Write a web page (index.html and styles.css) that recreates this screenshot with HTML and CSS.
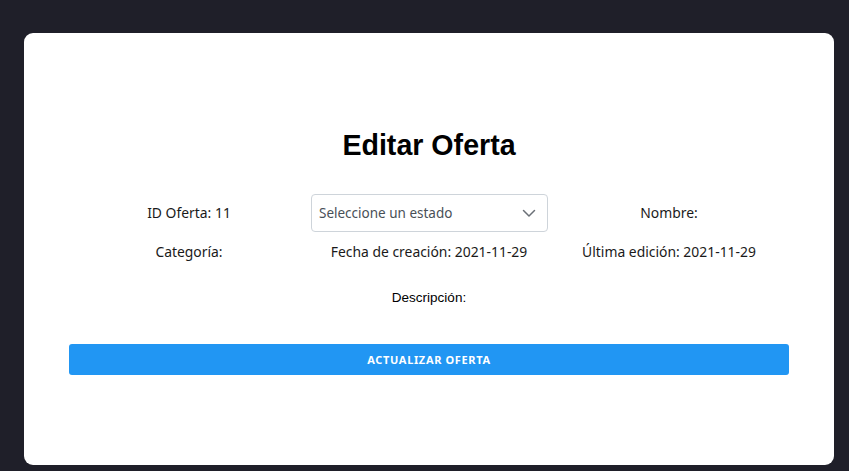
FILE: index.html
```html
<!DOCTYPE html>
<html lang="es">
<head>
<meta charset="utf-8">
<title>Editar Oferta</title>
<link rel="stylesheet" href="styles.css">
</head>
<body>
<main class="card">
  <h1 class="title">Editar Oferta</h1>
  <div class="fields">
    <div class="field">ID Oferta: 11</div>
    <div class="select">
      <span class="select-text">Seleccione un estado</span>
      <svg class="chev" width="16" height="12" viewBox="0 0 16 12"><path d="M2.5 3.5l5.5 5.5 5.5-5.5" fill="none" stroke="#6b7077" stroke-width="1.5" stroke-linecap="round" stroke-linejoin="round"/></svg>
    </div>
    <div class="field">Nombre:</div>
    <div class="field">Categoría:</div>
    <div class="field">Fecha de creación: 2021-11-29</div>
    <div class="field">Última edición: 2021-11-29</div>
  </div>
  <div class="desc">Descripción:</div>
  <button class="btn" type="button">ACTUALIZAR OFERTA</button>
</main>
</body>
</html>
```
FILE: styles.css
```css
html, body {
  margin: 0;
  padding: 0;
}
body {
  background: #1f1f29;
  padding: 33px 15px 0 24px;
  height: 471px;
  box-sizing: border-box;
  overflow: hidden;
}
.card {
  width: 810px;
  height: 432px;
  box-sizing: border-box;
  background: #fff;
  border-radius: 9px;
  padding: 95px 45px 0;
  font-family: "Noto Sans", "Open Sans", sans-serif;
  color: #1a1a1a;
}
.title {
  margin: 0;
  text-align: center;
  font-family: "Liberation Sans", Arial, sans-serif;
  font-weight: bold;
  font-size: 28.6px;
  line-height: 34px;
  color: #000;
}
.fields {
  margin-top: 32px;
  display: grid;
  grid-template-columns: repeat(3, 1fr);
  grid-template-rows: 38px 24px;
  row-gap: 8px;
  align-items: center;
}
.field {
  text-align: center;
  font-size: 13.9px;
  line-height: 24px;
}
.select {
  margin: 0 1px 0 2px;
  height: 38px;
  box-sizing: border-box;
  border: 1px solid #ced4da;
  border-radius: 4px;
  display: flex;
  align-items: center;
  justify-content: space-between;
  padding: 0 10px 0 7px;
}
.select-text {
  font-size: 13.5px;
  color: #495057;
}
.chev {
  display: block;
}
.desc {
  margin-top: 22px;
  text-align: center;
  font-family: "Liberation Sans", Arial, sans-serif;
  font-size: 13.5px;
  line-height: 24px;
  color: #000;
}
.btn {
  display: block;
  width: 100%;
  margin-top: 34px;
  height: 31px;
  border: none;
  border-radius: 3px;
  background: #2196f3;
  color: #fff;
  font-family: "Noto Sans", sans-serif;
  font-weight: bold;
  font-size: 11px;
  letter-spacing: 0.65px;
}
```
